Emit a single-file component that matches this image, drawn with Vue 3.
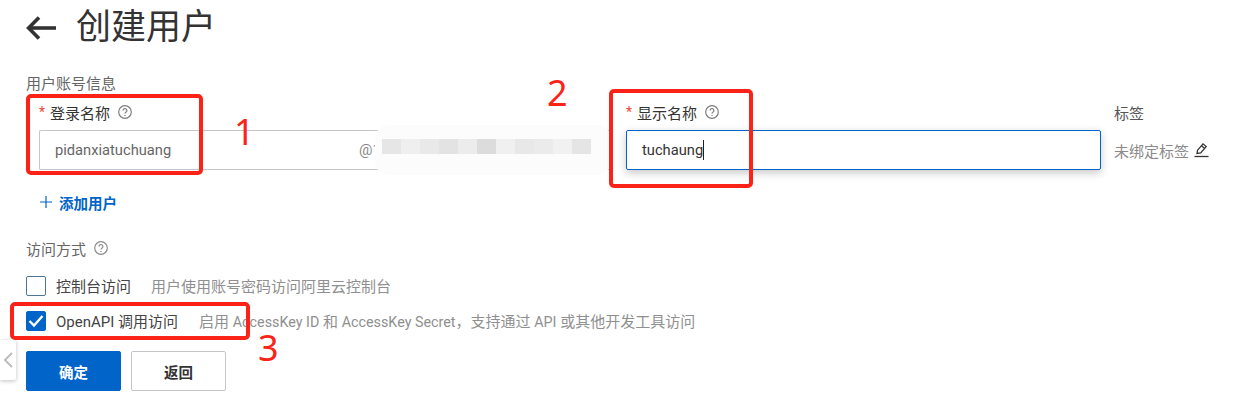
<script setup>
const blurBlocks = ['#e6e6e6','#efefef','#e9e9e9','#e3e3e3','#ececec','#dcdcdc','#f0f0f0','#e8e8e8','#ebebeb','#f1f1f1','#e5e5e5']
</script>

<template>
  <div class="page">
    <header class="head">
      <svg class="back" width="30" height="24" viewBox="0 0 30 24" fill="none" stroke="#333" stroke-width="3.600">
        <path d="M30 12H3" />
        <path d="M13 1.500 2.600 12 13 22.500" />
      </svg>
      <h1>创建用户</h1>
    </header>

    <div class="section-label">用户账号信息</div>

    <div class="form-row">
      <div class="field f1">
        <div class="label">
          <i>*</i><span>登录名称</span>
          <svg class="help" width="14" height="14" viewBox="0 0 14 14" fill="none" stroke="#7f7f7f" stroke-width="1.200">
            <circle cx="7" cy="7" r="6.300" />
            <path d="M5.100 5.500a1.900 1.900 0 1 1 2.900 1.600c-.7.4-1 .8-1 1.500" />
            <path d="M7 9.900v1" />
          </svg>
        </div>
        <div class="input">
          <span class="val">pidanxiatuchuang</span>
          <span class="suffix">@1</span>
        </div>
        <div class="blur">
          <div class="blocks">
            <b v-for="(c, i) in blurBlocks" :key="i" :style="{ background: c }"></b>
          </div>
        </div>
      </div>

      <div class="field f2">
        <div class="label">
          <i>*</i><span>显示名称</span>
          <svg class="help" width="14" height="14" viewBox="0 0 14 14" fill="none" stroke="#7f7f7f" stroke-width="1.200">
            <circle cx="7" cy="7" r="6.300" />
            <path d="M5.100 5.500a1.900 1.900 0 1 1 2.900 1.600c-.7.4-1 .8-1 1.500" />
            <path d="M7 9.900v1" />
          </svg>
        </div>
        <div class="input focus">
          <span class="val dark">tuchaung</span><span class="caret"></span>
        </div>
      </div>

      <div class="field f3">
        <div class="label plain">标签</div>
        <div class="tag-row">
          <span>未绑定标签</span>
          <svg width="15" height="16" viewBox="0 0 15 16" fill="none" stroke="#333" stroke-width="1.300">
            <path d="M3 11.500 3.600 8.200 9 1.800l3.200 2.800-5.500 6.300z" />
            <path d="M7.500 3.700l3.200 2.800" />
            <path d="M0.500 14.500h14" />
          </svg>
        </div>
      </div>
    </div>

    <div class="add">
      <svg width="12" height="12" viewBox="0 0 12 12" stroke="#0064c8" stroke-width="1.200">
        <path d="M6 0v12M0 6h12" />
      </svg>
      <span>添加用户</span>
    </div>

    <div class="access">
      <span>访问方式</span>
      <svg class="help" width="14" height="14" viewBox="0 0 14 14" fill="none" stroke="#8c8c8c" stroke-width="1.200">
        <circle cx="7" cy="7" r="6.300" />
        <path d="M5.100 5.500a1.900 1.900 0 1 1 2.900 1.600c-.7.4-1 .8-1 1.500" />
        <path d="M7 9.900v1" />
      </svg>
    </div>

    <div class="check-row">
      <span class="box"></span>
      <span class="name">控制台访问</span>
      <span class="desc">用户使用账号密码访问阿里云控制台</span>
    </div>
    <div class="check-row second">
      <span class="box on">
        <svg width="20" height="20" viewBox="0 0 20 20" fill="none" stroke="#fff" stroke-width="2.400">
          <path d="M3.500 10 8 14.500 16.500 5" />
        </svg>
      </span>
      <span class="name">OpenAPI 调用访问</span>
      <span class="desc">启用 <span class="lat">AccessKey ID</span> 和 <span class="lat">AccessKey Secret</span>，支持通过 <span class="lat">API</span> 或其他开发工具访问</span>
    </div>

    <div class="actions">
      <button class="btn primary">确定</button>
      <button class="btn">返回</button>
    </div>

    <div class="side-tab">
      <svg width="10" height="16" viewBox="0 0 10 16" fill="none" stroke="#bdbdbd" stroke-width="2">
        <path d="M9 1 2 8l7 7" />
      </svg>
    </div>

    <div class="mark m1"></div>
    <div class="mark m2"></div>
    <div class="mark m3"></div>
    <span class="num n1">1</span>
    <span class="num n2">2</span>
    <span class="num n3">3</span>
  </div>
</template>

<style scoped>
.page {
  position: relative;
  width: 1234px;
  height: 415px;
  overflow: hidden;
  background: #fff;
  color: #333;
  font-family: Roboto, "Noto Sans CJK SC", sans-serif;
  font-size: 15px;
  box-sizing: border-box;
  padding-left: 26px;
}
.head {
  display: flex;
  align-items: center;
  height: 56px;
}
h1 {
  margin: 0 0 0 20px;
  font-size: 35px;
  font-weight: 400;
  line-height: 56px;
  color: #333;
}
.section-label {
  margin-top: 18px;
  height: 20px;
  line-height: 20px;
  font-size: 15px;
  color: #666;
}
.form-row {
  display: flex;
  margin-top: 8px;
  padding-left: 13px;
}
.field { position: relative; }
.f1 { width: 571px; }
.f2 { width: 475px; margin-left: 16px; }
.f3 { margin-left: 13px; }
.label {
  display: flex;
  align-items: center;
  height: 20px;
  font-size: 15px;
  color: #333;
}
.label i {
  width: 11px;
  font-style: normal;
  color: #e84738;
  font-size: 14px;
}
.label.plain { color: #555; }
.help { margin-left: 8px; }
.input {
  display: flex;
  align-items: center;
  box-sizing: border-box;
  height: 40px;
  margin-top: 8px;
  padding-left: 15px;
  border: 1px solid #c4c6cc;
  border-right: 0;
  border-radius: 2px 0 0 2px;
}
.input.focus {
  border: 1px solid #0064c8;
  border-radius: 2px;
  box-shadow: 0 3px 8px rgba(0, 0, 0, .22);
}
.val { color: #666; font-size: 14.700px; }
.val.dark { color: #333; }
.caret {
  width: 1px;
  height: 20px;
  background: #222;
}
.suffix {
  margin-left: auto;
  margin-right: 229px;
  color: #888;
  font-size: 15px;
}
.blur {
  position: absolute;
  left: 336px;
  top: 23px;
  width: 236px;
  height: 50px;
  border-radius: 14px;
  background: #fcfcfc;
}
.blocks {
  display: flex;
  margin: 14px 0 0 7px;
  height: 15px;
}
.blocks b {
  flex: 0 0 19px;
  display: block;
}
.tag-row {
  display: flex;
  align-items: center;
  height: 40px;
  margin-top: 8px;
  gap: 5px;
  font-size: 15px;
  color: #8a8a8a;
}
.add {
  display: flex;
  align-items: center;
  gap: 7px;
  margin: 22px 0 0 14px;
  height: 20px;
  font-size: 14.500px;
  font-weight: 700;
  color: #0064c8;
}
.access {
  display: flex;
  align-items: center;
  margin-top: 26px;
  height: 20px;
  font-size: 15px;
  color: #666;
}
.check-row {
  display: flex;
  align-items: center;
  height: 20px;
  margin-top: 18px;
  font-size: 15px;
}
.check-row.second { margin-top: 15px; }
.box {
  box-sizing: border-box;
  width: 20px;
  height: 20px;
  border: 1px solid #4d7596;
  border-radius: 2px;
  flex: none;
}
.box.on {
  background: #0064c8;
  border-color: #0064c8;
  position: relative;
}
.box.on svg { display: block; margin: -1px; }
.name { margin-left: 10px; padding-bottom: 2px; color: #444; }
.desc { margin-left: 20px; padding-bottom: 2px; color: #8f8f8f; }
.second .desc { margin-left: 21px; }
.lat { font-size: 14.300px; }
.actions {
  display: flex;
  gap: 10px;
  margin-top: 20px;
}
.btn {
  box-sizing: border-box;
  width: 95px;
  height: 40px;
  padding: 0;
  border: 1px solid #c4c6cc;
  border-radius: 2px;
  background: #fff;
  color: #333;
  font: 700 14.500px Roboto, "Noto Sans CJK SC", sans-serif;
}
.btn.primary {
  background: #0064c8;
  border-color: #0064c8;
  color: #fff;
}
.side-tab {
  position: absolute;
  left: 0;
  top: 340px;
  box-sizing: border-box;
  width: 16px;
  height: 40px;
  display: flex;
  align-items: center;
  justify-content: center;
  background: #fff;
  border-radius: 0 2px 2px 0;
  box-shadow: 0 1px 4px rgba(0, 0, 0, .25);
}
.mark {
  position: absolute;
  box-sizing: border-box;
  border: 4px solid #fb2317;
  border-radius: 5px;
}
.m1 { left: 26px; top: 94px; width: 177px; height: 81px; }
.m2 { left: 609px; top: 89px; width: 144px; height: 99px; }
.m3 { left: 10px; top: 302px; width: 240px; height: 38px; }
.num {
  position: absolute;
  font-family: "Noto Sans", sans-serif;
  font-size: 36px;
  line-height: 30px;
  color: #fb2317;
}
.n1 { left: 234px; top: 117px; }
.n2 { left: 547px; top: 78px; }
.n3 { left: 258px; top: 333px; }
</style>
